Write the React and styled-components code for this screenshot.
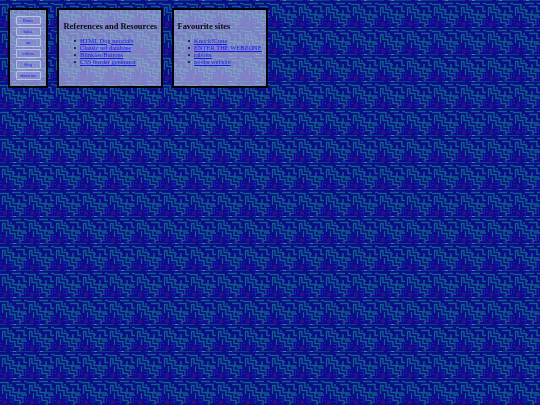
import React from "react";
import styled, { createGlobalStyle } from "styled-components";

// one 27px tile of the circuit wallpaper, softened a little because the shot is scaled down
const tile = `<svg xmlns='http://www.w3.org/2000/svg' width='27' height='27'>
<defs><filter id='s' x='0' y='0' width='100%' height='100%'><feGaussianBlur stdDeviation='0.35' edgeMode='wrap'/></filter></defs>
<g filter='url(#s)'>
<rect width='27' height='27' fill='#07078a'/>
<g fill='none' stroke='#0e6488' stroke-width='1.4'>
<path d='M0 4.5H8V9.5H13V14.5H18V19.5H23V25'/>
<path d='M2 7.5H5V12.5H10V17.5H15V22.5H20V27'/>
<path d='M12 3.5H21M24 3.5H27'/>
<path d='M16 6.5H24V11.5H27'/>
<path d='M19 10V15H26'/>
<path d='M2.5 8V16'/>
<path d='M6.5 15V21'/>
<path d='M11 6V8M14 10V12M21 17H27'/>
</g>
<g fill='none' stroke='#1424ae' stroke-width='1'>
<path d='M9 20.5H13M9 23.5H14M17 25.5H19'/>
<path d='M12.5 19V26M0 19.5H2M0 22.5H2'/>
<path d='M23.5 20V24M25.5 19V25'/>
</g>
<path d='M0 .5H6M10 .5H27' stroke='#0f3e92' stroke-width='1'/>
<rect x='13' y='0' width='3' height='1' fill='#4a78a4'/>
<rect x='3' y='23' width='4' height='3' fill='#300e8a'/>
<rect x='4' y='22' width='2' height='1' fill='#300e8a'/>
<rect x='20' y='24' width='2' height='1' fill='#8a2a7a'/>
</g>
</svg>`;

const GlobalStyle = createGlobalStyle`
  html, body {
    margin: 0;
    padding: 0;
  }
  body {
    min-height: 405px;
    background-color: #07078a;
    background-image: url("data:image/svg+xml,${encodeURIComponent(tile)}");
    font-family: "Liberation Serif", "Times New Roman", serif;
  }
`;

const Page = styled.div`
  display: flex;
  align-items: flex-start;
  gap: 9px;
  padding: 8px 8px;
  filter: blur(0.25px);
`;

const Panel = styled.section`
  box-sizing: border-box;
  width: ${(p) => p.$width}px;
  height: 80px;
  padding: ${(p) => p.$pad || "0"};
  border: 2.5px solid #04040c;
  background: rgba(200, 205, 235, 0.6);
  flex: none;
`;

const Nav = styled.nav`
  display: flex;
  flex-direction: column;
  gap: 2px;
`;

const NavLink = styled.a`
  box-sizing: border-box;
  display: block;
  height: 9px;
  line-height: 7px;
  border: 1px solid #bcc2e2;
  border-radius: 1px;
  background: rgba(140, 150, 220, 0.4);
  color: #1a1ae0;
  font-size: 4.5px;
  text-align: center;
  text-decoration: none;
`;

const Title = styled.h2`
  margin: 0 0 5px;
  padding-top: 1px;
  font-size: 8.45px;
  line-height: 11px;
  font-weight: bold;
  color: #0a0a14;
  white-space: nowrap;
`;

const List = styled.ul`
  margin: 0;
  padding: 0 0 0 16.5px;
  list-style: none;
  font-size: 6.45px;
  line-height: 7.2px;
`;

const Item = styled.li`
  position: relative;
  white-space: nowrap;

  &::before {
    content: "";
    position: absolute;
    left: -6.5px;
    top: 3px;
    width: 2px;
    height: 2px;
    border-radius: 50%;
    background: #0a0a30;
  }
`;

const Link = styled.a`
  color: #1414e6;
  text-decoration: underline;
`;

const navItems = ["Home", "links", "art", "videos", "blog", "about me"];
const references = [
  "HTML Dog tutorials",
  "Classic ref database",
  "Blinkies/Buttons",
  "CSS border generator",
];
const sites = ["Knock!Crate", "ENTER THE WEBZONE", "rabbits", "noobs website"];

export default function App() {
  return (
    <>
      <GlobalStyle />
      <Page>
        <Panel $width={40} $pad="5.5px 5.5px">
          <Nav>
            {navItems.map((n) => (
              <NavLink href="#" key={n}>
                {n}
              </NavLink>
            ))}
          </Nav>
        </Panel>
        <Panel $width={106} $pad="9.5px 4.5px">
          <Title>References and Resources</Title>
          <List>
            {references.map((r) => (
              <Item key={r}>
                <Link href="#">{r}</Link>
              </Item>
            ))}
          </List>
        </Panel>
        <Panel $width={96} $pad="9.5px 3.5px">
          <Title>Favourite sites</Title>
          <List>
            {sites.map((s) => (
              <Item key={s}>
                <Link href="#">{s}</Link>
              </Item>
            ))}
          </List>
        </Panel>
      </Page>
    </>
  );
}
